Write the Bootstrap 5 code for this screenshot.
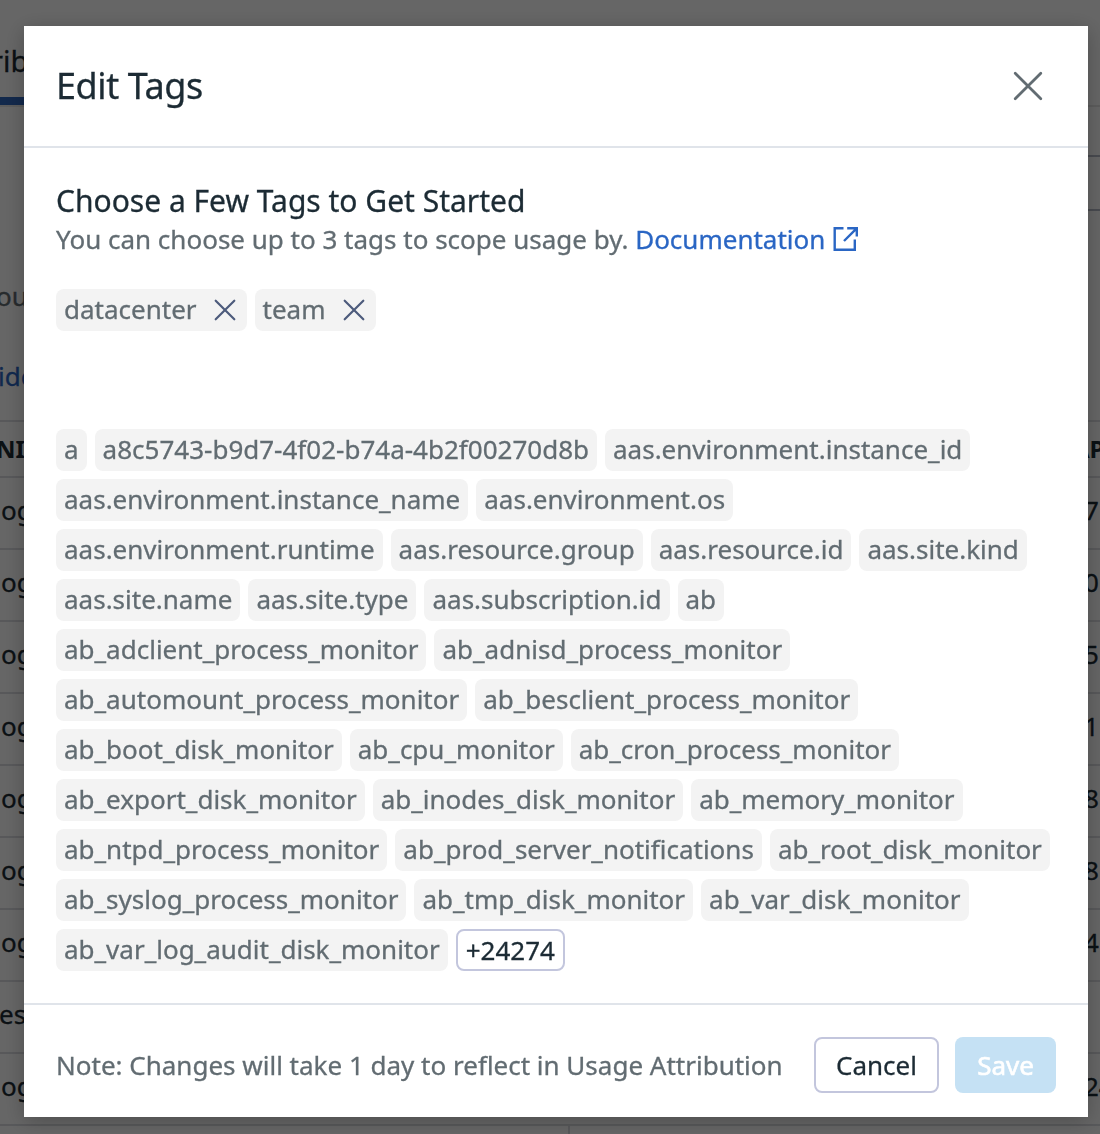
<!DOCTYPE html>
<html lang="en">
<head>
<meta charset="utf-8">
<meta name="viewport" content="width=device-width, initial-scale=1">
<title>Edit Tags</title>
<link href="https://cdn.jsdelivr.net/npm/bootstrap@5.3.0/dist/css/bootstrap.min.css" rel="stylesheet">
<style>
  body { font-family: "Noto Sans", sans-serif; font-size: 26px; line-height: 36px; color: #1c2b34; height: 1134px; overflow: hidden; -webkit-text-stroke: .3px currentColor; }
  .usage-page { height: 1134px; overflow: hidden; white-space: nowrap; }
  .page-tabs { height: 107px; border-bottom: 2px solid #e6e6e6; }
  .tab-current { width: 60px; height: 105px; padding-top: 43px; border-bottom: 8px solid #2f66bd; font-size: 29px; text-indent: -9px; }
  .filter-area { height: 313px; }
  .filter-box { width: 100px; height: 56px; margin-top: 48px; border: 2px solid #b4b9c6; border-right: 0; }
  .filter-label { padding-top: 171px; color: #626c72; text-indent: -4px; }
  .filter-link { padding-top: 44px; color: #2a66c4; text-indent: -2px; }
  .usage-head { height: 58px; border-top: 2px solid #dcdde2; border-bottom: 2px solid #dcdde2; font-size: 24px; font-weight: 700; -webkit-text-stroke: 0; }
  .head-start { margin-left: -4px; }
  .usage-line { height: 72px; border-bottom: 2px solid #dcdde2; padding-left: 1px; padding-bottom: 6px; }
  .usage-line.group-line { padding-left: 0; text-indent: -1px; }
  .cell-end { width: 16px; }
  .cell-head { width: 27px; }
  .split-line { margin-left: 568px; width: 2px; height: 10px; background: #dcdde2; }
  .shade { background: rgba(0,0,0,.6); padding: 26px 12px 0 24px; }
  .tags-dialog { width: 1064px; height: 1091px; background: #fff; box-shadow: 0 4px 20px rgba(0,0,0,.25); }
  .dialog-top { height: 122px; padding: 0 44px 0 32px; border-bottom: 2px solid #e0e4ea; }
  .dialog-title { font-size: 36px; line-height: 48px; font-weight: 400; letter-spacing: -.4px; }
  .dialog-main { padding: 33px 32px 0; }
  .main-title { font-size: 30px; line-height: 40px; font-weight: 400; }
  .soft { color: #626c72; }
  .doc-link { color: #2a66c4; }
  .doc-icon { margin-left: 7.5px; }
  .tag-set { gap: 8px; }
  .tag-chip { height: 42px; padding: 0 8px 2px; border-radius: 8px; background: #f3f3f3; color: #626c72; white-space: nowrap; }
  .chip-x { margin: 2px 1px 0 15px; }
  .chosen { margin-top: 32px; margin-bottom: 98px; }
  .more-chip { background: #fff; color: #1c2b34; border: 2px solid #c3c6dd; padding: 0 8px; }
  .dialog-foot { height: 114px; padding: 8px 32px 0; border-top: 2px solid #e0e4ea; gap: 16px; }
  .foot-btn { height: 56px; padding: 0; border-radius: 8px; font-size: 26px; line-height: 36px; }
  .cancel-btn { width: 125px; border: 2px solid #c3c6dd; color: #1c2b34; background: #fff; }
  .save-btn, .save-btn:disabled { width: 101px; border: 0; color: #fff; background: #c5e1f4; opacity: 1; -webkit-text-stroke-width: .6px; }
</style>
<script src="https://cdn.jsdelivr.net/npm/bootstrap@5.3.0/dist/js/bootstrap.bundle.min.js"></script>
</head>
<body>
<div class="usage-page" aria-hidden="true">
  <div class="page-tabs"><div class="tab-current">rib</div></div>
  <div class="filter-area d-flex justify-content-between">
    <div><div class="filter-label">ou</div><div class="filter-link">ide</div></div>
    <div class="filter-box"></div>
  </div>
  <div class="usage-head d-flex align-items-center justify-content-between"><span class="head-start">NI</span><span class="cell-head">AP</span></div>
  <div class="usage-line d-flex align-items-center justify-content-between"><span>og</span><span class="cell-end">7</span></div>
  <div class="usage-line d-flex align-items-center justify-content-between"><span>og</span><span class="cell-end">0</span></div>
  <div class="usage-line d-flex align-items-center justify-content-between"><span>og</span><span class="cell-end">5</span></div>
  <div class="usage-line d-flex align-items-center justify-content-between"><span>og</span><span class="cell-end">1</span></div>
  <div class="usage-line d-flex align-items-center justify-content-between"><span>og</span><span class="cell-end">8</span></div>
  <div class="usage-line d-flex align-items-center justify-content-between"><span>og</span><span class="cell-end">8</span></div>
  <div class="usage-line d-flex align-items-center justify-content-between"><span>og</span><span class="cell-end">4</span></div>
  <div class="usage-line group-line d-flex align-items-center"><span>es</span></div>
  <div class="usage-line d-flex align-items-center justify-content-between"><span>og</span><span class="cell-end">24</span></div>
  <div class="split-line"></div>
</div>

<div class="shade position-fixed top-0 start-0 w-100 h-100">
  <div class="tags-dialog d-flex flex-column" role="dialog" aria-labelledby="dialogTitle">
    <div class="dialog-top d-flex align-items-center justify-content-between">
      <h1 class="dialog-title mb-0" id="dialogTitle">Edit Tags</h1>
      <svg width="32" height="32" viewBox="0 0 32 32" fill="none" stroke="#626c72" stroke-width="2.8" stroke-linecap="round"><path d="M3.2 3.2 28.8 28.8M28.8 3.2 3.2 28.8"/></svg>
    </div>
    <div class="dialog-main flex-grow-1">
      <h2 class="main-title mb-0">Choose a Few Tags to Get Started</h2>
      <div class="soft d-flex align-items-center"><span>You can choose up to 3 tags to scope usage by.&nbsp;</span><span class="doc-link">Documentation</span>
        <svg class="doc-icon" width="26" height="26" viewBox="0 0 26 26" fill="none" stroke="#2a66c4" stroke-width="2.4"><path d="M10.5 2.2H1.7V23.8H21.8V13.5M14.2 2.2H23.8V10.6M11 15 23.4 2.6"/></svg>
      </div>
      <div class="tag-set chosen d-flex">
        <div class="tag-chip d-flex align-items-center">datacenter<svg class="chip-x" width="26" height="26" viewBox="0 0 26 26" fill="none" stroke="#4d5b7c" stroke-width="2.2" stroke-linecap="round"><path d="M3.7 3.7 22.3 22.3M22.3 3.7 3.7 22.3"/></svg></div>
        <div class="tag-chip d-flex align-items-center">team<svg class="chip-x" width="26" height="26" viewBox="0 0 26 26" fill="none" stroke="#4d5b7c" stroke-width="2.2" stroke-linecap="round"><path d="M3.7 3.7 22.3 22.3M22.3 3.7 3.7 22.3"/></svg></div>
      </div>
      <div class="tag-set d-flex flex-wrap">
        <div class="tag-chip d-flex align-items-center">a</div>
        <div class="tag-chip d-flex align-items-center">a8c5743-b9d7-4f02-b74a-4b2f00270d8b</div>
        <div class="tag-chip d-flex align-items-center">aas.environment.instance_id</div>
        <div class="tag-chip d-flex align-items-center">aas.environment.instance_name</div>
        <div class="tag-chip d-flex align-items-center">aas.environment.os</div>
        <div class="tag-chip d-flex align-items-center">aas.environment.runtime</div>
        <div class="tag-chip d-flex align-items-center">aas.resource.group</div>
        <div class="tag-chip d-flex align-items-center">aas.resource.id</div>
        <div class="tag-chip d-flex align-items-center">aas.site.kind</div>
        <div class="tag-chip d-flex align-items-center">aas.site.name</div>
        <div class="tag-chip d-flex align-items-center">aas.site.type</div>
        <div class="tag-chip d-flex align-items-center">aas.subscription.id</div>
        <div class="tag-chip d-flex align-items-center">ab</div>
        <div class="tag-chip d-flex align-items-center">ab_adclient_process_monitor</div>
        <div class="tag-chip d-flex align-items-center">ab_adnisd_process_monitor</div>
        <div class="tag-chip d-flex align-items-center">ab_automount_process_monitor</div>
        <div class="tag-chip d-flex align-items-center">ab_besclient_process_monitor</div>
        <div class="tag-chip d-flex align-items-center">ab_boot_disk_monitor</div>
        <div class="tag-chip d-flex align-items-center">ab_cpu_monitor</div>
        <div class="tag-chip d-flex align-items-center">ab_cron_process_monitor</div>
        <div class="tag-chip d-flex align-items-center">ab_export_disk_monitor</div>
        <div class="tag-chip d-flex align-items-center">ab_inodes_disk_monitor</div>
        <div class="tag-chip d-flex align-items-center">ab_memory_monitor</div>
        <div class="tag-chip d-flex align-items-center">ab_ntpd_process_monitor</div>
        <div class="tag-chip d-flex align-items-center">ab_prod_server_notifications</div>
        <div class="tag-chip d-flex align-items-center">ab_root_disk_monitor</div>
        <div class="tag-chip d-flex align-items-center">ab_syslog_process_monitor</div>
        <div class="tag-chip d-flex align-items-center">ab_tmp_disk_monitor</div>
        <div class="tag-chip d-flex align-items-center">ab_var_disk_monitor</div>
        <div class="tag-chip d-flex align-items-center">ab_var_log_audit_disk_monitor</div>
        <div class="tag-chip more-chip d-flex align-items-center">+24274</div>
      </div>
    </div>
    <div class="dialog-foot d-flex align-items-center">
      <span class="soft me-auto text-nowrap">Note: Changes will take 1 day to reflect in Usage Attribution</span>
      <button class="btn foot-btn cancel-btn" type="button">Cancel</button>
      <button class="btn foot-btn save-btn" type="button" disabled>Save</button>
    </div>
  </div>
</div>
</body>
</html>
